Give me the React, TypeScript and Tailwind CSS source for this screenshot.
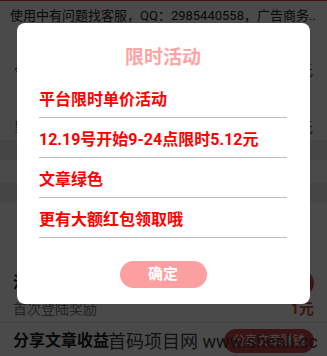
import React from "react";

const font = { fontFamily: '"Roboto", "Noto Sans CJK SC", sans-serif' };

const rules = ["平台限时单价活动", "12.19号开始9-24点限时5.12元", "文章绿色", "更有大额红包领取哦"];

const tasks = [
  { title: "活跃奖励", sub: "首次登陆奖励", reward: "1元", action: "立即领取" },
  { title: "分享文章收益", sub: "每次阅读奖励", reward: "0.5元", action: "分享文章赚钱" }
];

function TaskRow({ task }: { task: (typeof tasks)[number] }) {
  return (
    <div className="flex h-[58px] flex-col border-b border-[#e5e5e5] px-[13px] pt-[6px]">
      <div className="flex h-[24px] items-center justify-between">
        <span className="text-[16px] font-bold text-[#222]">{task.title}</span>
        <span className="flex h-[24px] w-[90px] items-center justify-center rounded-full bg-[#c84545] text-[12px] text-white">
          {task.action}
        </span>
      </div>
      <div className="mt-[4px] flex h-[20px] items-center justify-between">
        <span className="text-[14px] text-[#777]">{task.sub}</span>
        <span className="text-[15px] font-bold text-[#d04545]">{task.reward}</span>
      </div>
    </div>
  );
}

export default function App() {
  return (
    <div className="relative h-[356px] w-[327px] overflow-hidden bg-white" style={font}>
      <div className="h-px bg-[#d84040]" />
      <div className="flex h-[29px] items-center whitespace-nowrap px-[10px] text-[13px] text-[#222]">
        使用中有问题找客服，QQ：2985440558，广告商务..
      </div>

      {/* page behind the dialog */}
      <div className="flex h-[110px] flex-col px-[14px]">
        <div className="mt-[30px] flex h-[20px] items-center justify-between text-[14px] text-[#444]">
          <span>今日收益</span>
          <span>0.00元</span>
        </div>
        <div className="mt-[37px] flex h-[20px] items-center justify-between text-[14px] text-[#444]">
          <span>累计收益</span>
          <span>0.00元</span>
        </div>
      </div>
      <div className="h-[20px] bg-[#eeeeee]" />
      <div className="h-[23px]" />
      <div className="h-[19px] bg-[#eeeeee]" />
      <div className="h-[63px]" />
      {tasks.map((t) => (
        <TaskRow key={t.title} task={t} />
      ))}

      {/* modal */}
      <div className="absolute inset-0 bg-black/[0.71] px-[17px] pt-[23px]">
        <div className="flex h-[281px] flex-col rounded-lg bg-white px-[22px] pr-[23px]">
          <div className="mt-[22px] text-center text-[19px] font-bold leading-[26px] text-[#ffa3a3]">限时活动</div>
          <div className="mt-[7px]">
            {rules.map((r) => (
              <div
                key={r}
                className="flex h-[40px] items-center border-b border-[#bdbdbd] pt-[4px] text-[16px] font-bold text-[#ff0000]"
              >
                {r}
              </div>
            ))}
          </div>
          <div className="mt-[23px] flex justify-center">
            <button className="h-[27px] w-[87px] rounded-full bg-[#fb9fa0] text-[15px] font-bold text-white">
              确定
            </button>
          </div>
        </div>
      </div>

      <div className="absolute left-[108px] top-[329px] whitespace-nowrap text-[18px] leading-[26px] text-[#111]">
        首码项目网 www.shenli.cc
      </div>
    </div>
  );
}
